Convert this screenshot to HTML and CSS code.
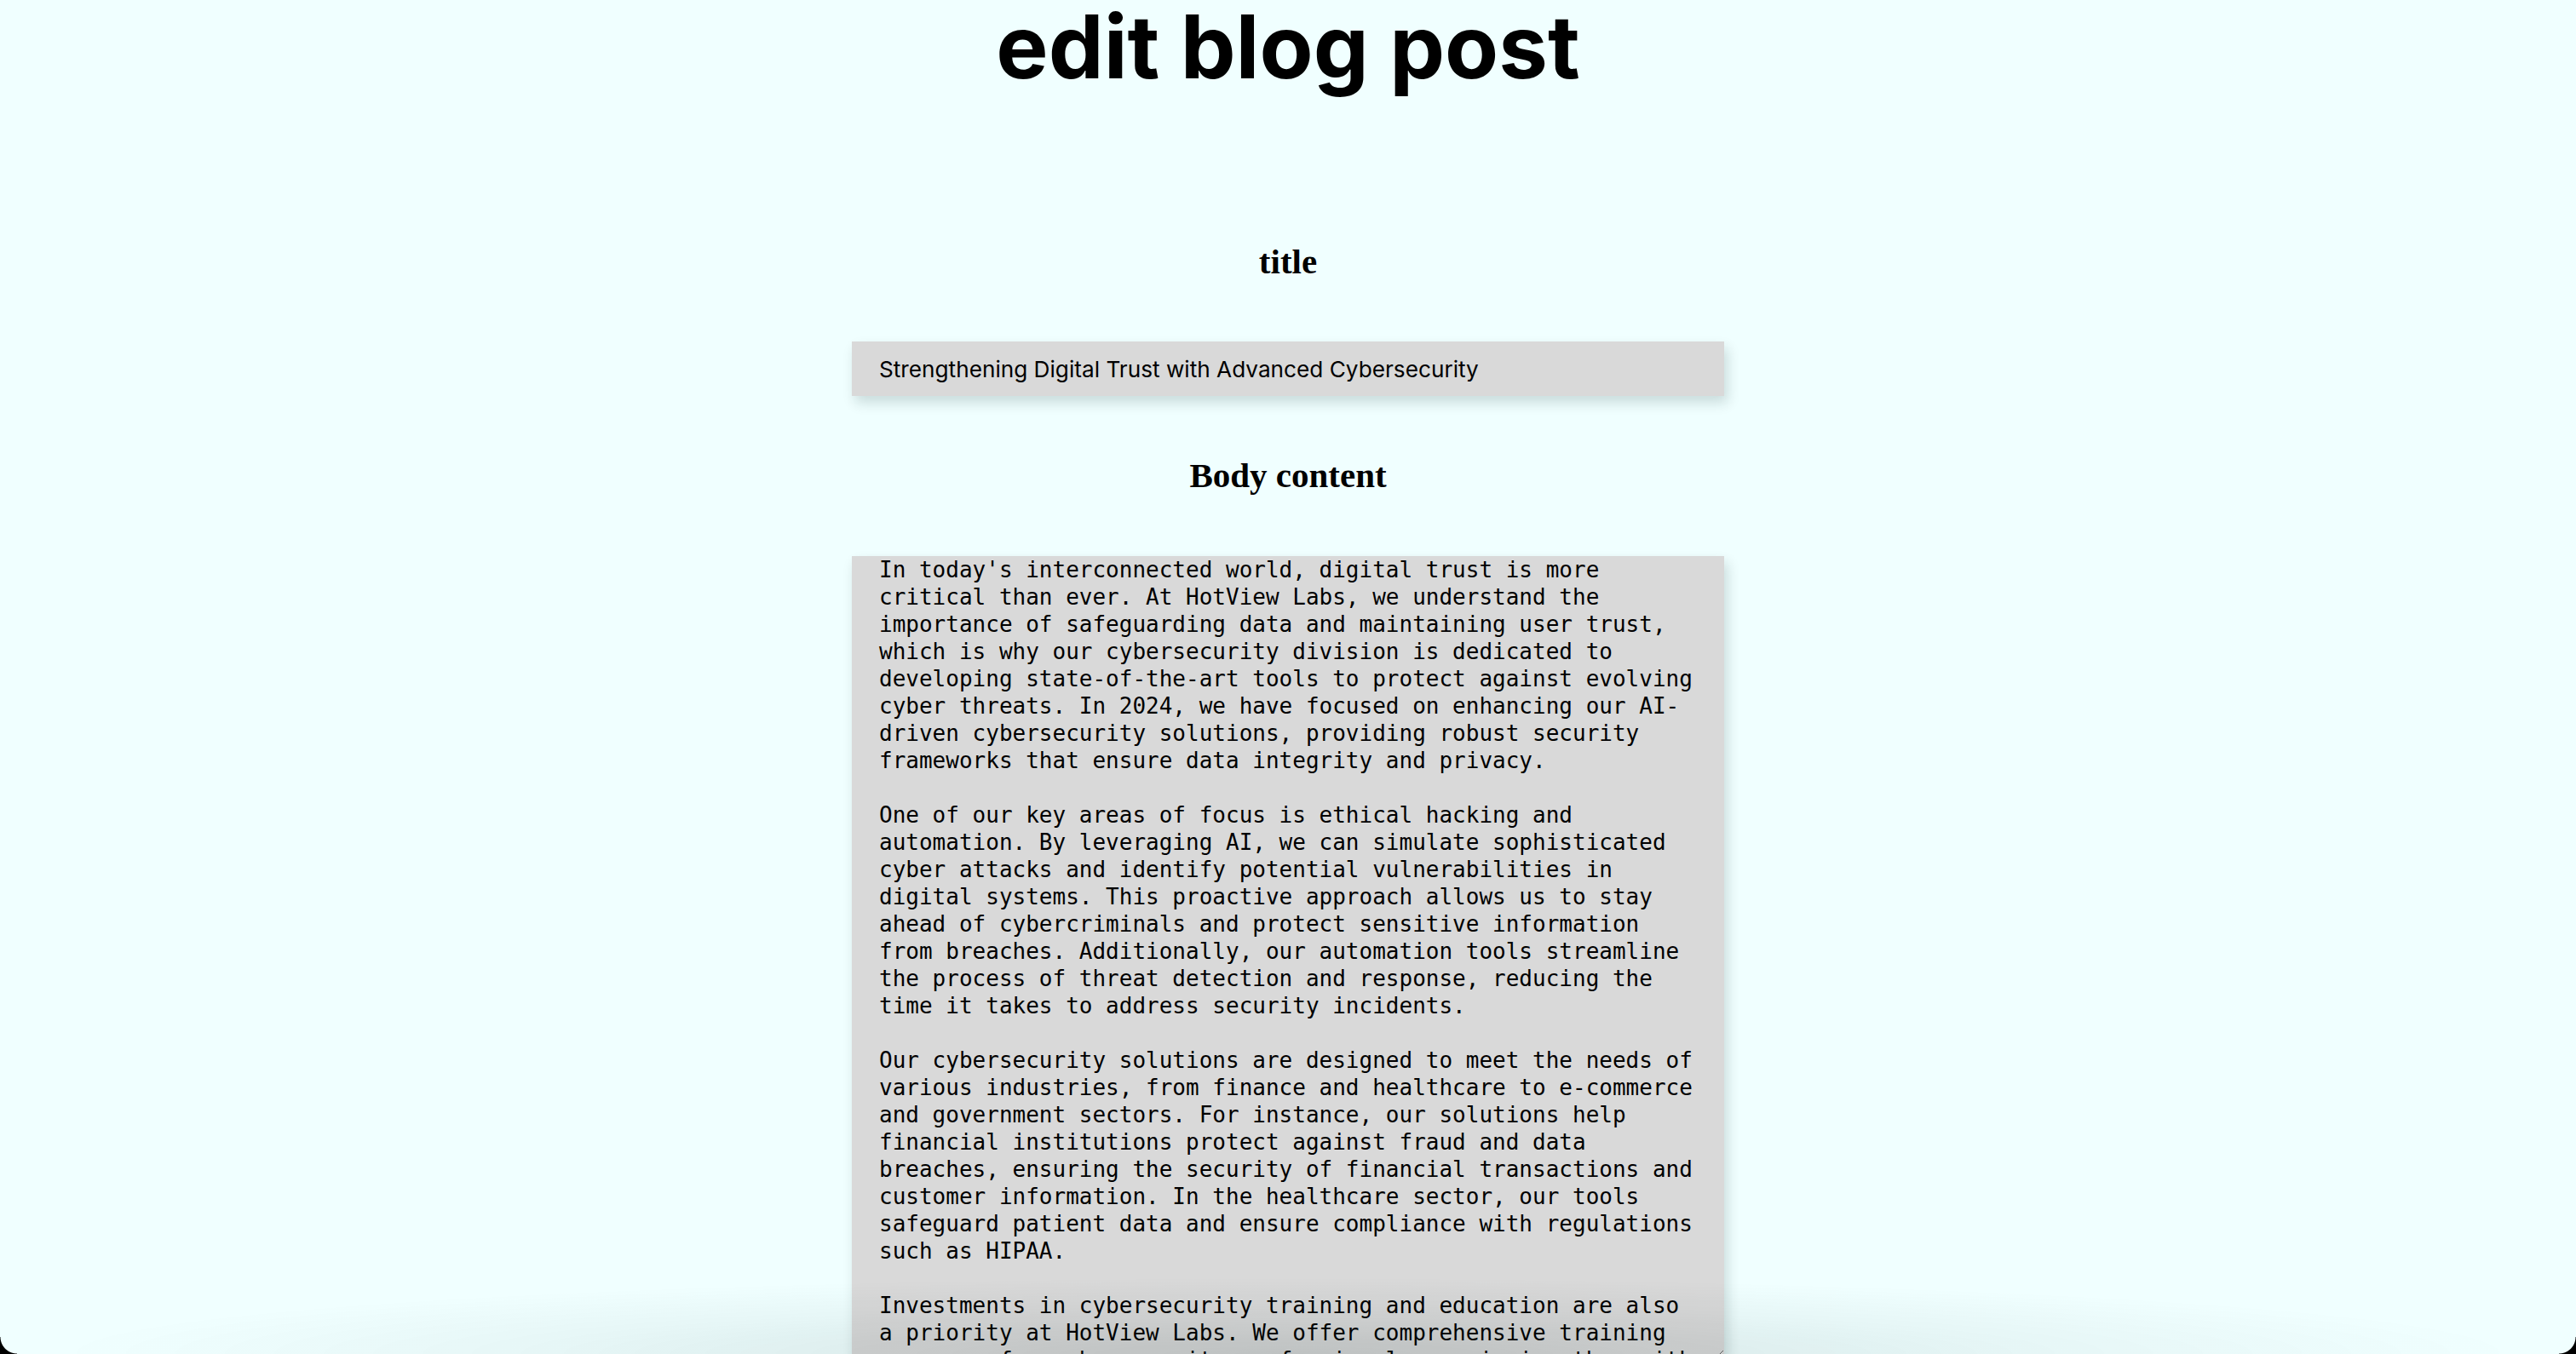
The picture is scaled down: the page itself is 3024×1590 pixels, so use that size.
FILE: index.html
```html
<!DOCTYPE html>
<html lang="en">
<head>
<meta charset="utf-8">
<title>edit blog post</title>
<link rel="stylesheet" href="styles.css">
</head>
<body>
<main class="page">
  <h1 class="page-title">edit blog post</h1>
  <form class="post-form">
    <label class="field-label" for="title">title</label>
    <input class="title-input" id="title" type="text" value="Strengthening Digital Trust with Advanced Cybersecurity">
    <label class="field-label field-label--body" for="body">Body content</label>
    <textarea class="body-input" id="body">In today's interconnected world, digital trust is more critical than ever. At HotView Labs, we understand the importance of safeguarding data and maintaining user trust, which is why our cybersecurity division is dedicated to developing state-of-the-art tools to protect against evolving cyber threats. In 2024, we have focused on enhancing our AI-driven cybersecurity solutions, providing robust security frameworks that ensure data integrity and privacy.

One of our key areas of focus is ethical hacking and automation. By leveraging AI, we can simulate sophisticated cyber attacks and identify potential vulnerabilities in digital systems. This proactive approach allows us to stay ahead of cybercriminals and protect sensitive information from breaches. Additionally, our automation tools streamline the process of threat detection and response, reducing the time it takes to address security incidents.

Our cybersecurity solutions are designed to meet the needs of various industries, from finance and healthcare to e-commerce and government sectors. For instance, our solutions help financial institutions protect against fraud and data breaches, ensuring the security of financial transactions and customer information. In the healthcare sector, our tools safeguard patient data and ensure compliance with regulations such as HIPAA.

Investments in cybersecurity training and education are also a priority at HotView Labs. We offer comprehensive training programs for cybersecurity professionals, equipping them with the skills and knowledge needed to combat emerging threats.</textarea>
  </form>
</main>
<div class="bottom-shade"></div>
<div class="corner corner--left"></div>
<div class="corner corner--right"></div>
</body>
</html>
```

FILE: styles.css
```css
html, body {
  margin: 0;
  padding: 0;
  overflow: hidden;
  height: 100%;
}

body {
  background: #f0ffff;
  color: #000;
}

.page {
  display: flex;
  flex-direction: column;
  align-items: center;
}

.page-title {
  margin: 0;
  font-family: Inter, "Noto Sans", sans-serif;
  font-weight: 700;
  font-size: 103px;
  line-height: 109px;
  letter-spacing: 0;
}

.post-form {
  display: flex;
  flex-direction: column;
  align-items: center;
  margin-top: 174px;
}

.field-label {
  font-family: "Liberation Serif", "Times New Roman", serif;
  font-weight: 700;
  font-size: 41px;
  line-height: 48px;
  margin-bottom: 70px;
}

.field-label--body {
  margin-top: 69px;
  margin-bottom: 71px;
}

.title-input {
  box-sizing: border-box;
  width: 1024px;
  height: 64px;
  margin: 0;
  padding: 0 32px;
  border: none;
  outline: none;
  background: #d9d9d9;
  color: #000;
  font-family: Inter, "Noto Sans", sans-serif;
  font-size: 26.2px;
  box-shadow: 4px 8px 14px rgba(0, 40, 40, 0.16);
}

.body-input {
  box-sizing: border-box;
  width: 1024px;
  height: 941px;
  margin: 0;
  padding: 0 32px;
  border: none;
  outline: none;
  background: #d9d9d9;
  color: #000;
  font-family: "DejaVu Sans Mono", "Liberation Mono", monospace;
  font-size: 26px;
  line-height: 32px;
  overflow: hidden;
  resize: vertical;
  box-shadow: 4px 8px 14px rgba(0, 40, 40, 0.16);
}

.bottom-shade {
  position: fixed;
  left: 0;
  right: 0;
  bottom: 0;
  height: 90px;
  pointer-events: none;
  background: radial-gradient(ellipse 48% 100% at 50% 100%, rgba(0, 30, 30, 0.12), rgba(0, 30, 30, 0.04) 60%, rgba(0, 30, 30, 0) 100%);
}

.corner {
  position: fixed;
  bottom: 0;
  width: 20px;
  height: 20px;
  pointer-events: none;
}

.corner--left {
  left: 0;
  background: radial-gradient(circle at 100% 0, transparent 19px, #000 20px);
}

.corner--right {
  right: 0;
  background: radial-gradient(circle at 0 0, transparent 19px, #000 20px);
}
```
